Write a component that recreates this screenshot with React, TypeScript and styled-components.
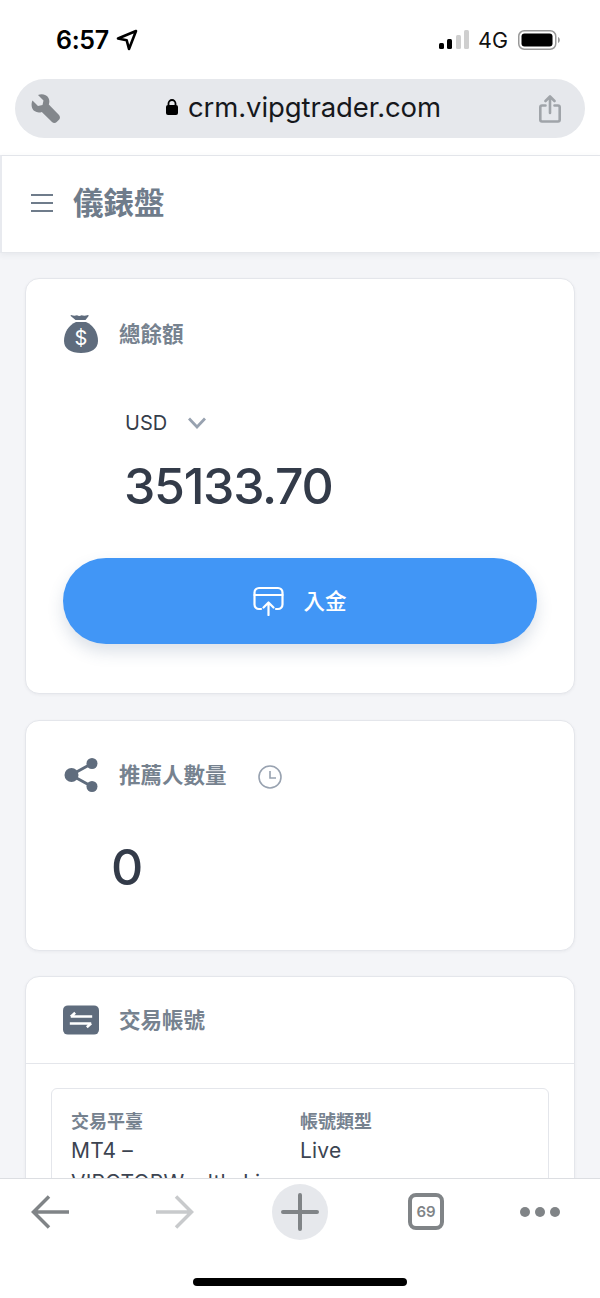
import React from "react";
import styled, { createGlobalStyle } from "styled-components";

const SANS = `Inter, "Noto Sans CJK TC", "Liberation Sans", sans-serif`;

const GlobalStyle = createGlobalStyle`
  html, body { margin: 0; padding: 0; background: #fff; }
  * { box-sizing: border-box; }
`;

const Phone = styled.div`
  width: 600px;
  height: 1298px;
  display: flex;
  flex-direction: column;
  overflow: hidden;
  background: #fff;
  font-family: ${SANS};
`;

const StatusBar = styled.div`
  height: 79px;
  flex: none;
  padding: 24px 40px 0 56px;
  display: flex;
  justify-content: space-between;
  align-items: flex-start;
`;

const StatusSide = styled.div`
  height: 32px;
  display: flex;
  align-items: center;
`;

const Time = styled.span`
  font-size: 25px;
  font-weight: 600;
  letter-spacing: -0.3px;
  color: #000;
  margin-right: 7px;
`;

const Network = styled.span`
  font-size: 21.5px;
  font-weight: 400;
  color: #111;
  margin: 0 10px 0 9px;
`;

const AddressBar = styled.div`
  height: 59px;
  flex: none;
  margin: 0 15px;
  padding: 0 24px 0 14px;
  border-radius: 30px;
  background: #e6e8ec;
  display: flex;
  align-items: center;
  justify-content: space-between;
`;

const Url = styled.div`
  display: flex;
  align-items: center;
  gap: 10px;
  margin-left: 7px;
  padding-bottom: 3px;
  font-size: 27.5px;
  letter-spacing: -0.1px;
  color: #16181c;
`;

const PageHeader = styled.header`
  height: 98px;
  flex: none;
  margin-top: 17px;
  padding: 0 0 3px 29px;
  display: flex;
  align-items: center;
  gap: 20px;
  border-top: 1px solid #e3e5ea;
  border-left: 2px solid #e8eaef;
  border-bottom: 1px solid #e6e8ec;
  box-shadow: 0 2px 6px rgba(60, 70, 90, 0.07);
  position: relative;
`;

const PageTitle = styled.h1`
  margin: 0;
  font-size: 30.5px;
  font-weight: 700;
  line-height: 40px;
  color: #6f7c8b;
`;

const Content = styled.main`
  flex: 1;
  min-height: 0;
  overflow: hidden;
  padding: 25px 25px 0;
  background: #f4f5f8;
  display: flex;
  flex-direction: column;
  gap: 25.5px;
`;

const Card = styled.section`
  flex: none;
  background: #fff;
  border: 1.5px solid #e4e6eb;
  border-radius: 14px;
  box-shadow: 0 1px 3px rgba(60, 70, 90, 0.06);
`;

const CardBody = styled.div`
  padding: 36px 37px 49px;
`;

const ReferralBody = styled.div`
  padding: 37px 37px 53px;
`;

const CardHead = styled.div`
  display: flex;
  align-items: center;
  gap: 20px;
`;

const IconSlot = styled.div`
  width: 36px;
  display: flex;
  justify-content: center;
  flex: none;
`;

const CardTitle = styled.div`
  font-size: 21.5px;
  font-weight: 700;
  line-height: 30px;
  color: #76828f;
`;

const ClockIcon = styled.svg`
  margin: 4px 0 0 11px;
`;

const Currency = styled.div`
  margin: 55px 0 0 62px;
  display: flex;
  align-items: center;
  gap: 21px;
  font-size: 20px;
  line-height: 30px;
  color: #353d4a;
`;

const Amount = styled.div`
  margin: 13px 0 0 61px;
  font-size: 50px;
  font-weight: 500;
  line-height: 70px;
  letter-spacing: -1.3px;
  color: #333b49;
`;

const DepositButton = styled.button`
  width: 474px;
  height: 86px;
  margin-top: 37px;
  border: 0;
  border-radius: 43px;
  background: #4196f6;
  box-shadow: 0 8px 16px rgba(60, 90, 130, 0.18);
  color: #fff;
  font-family: ${SANS};
  font-size: 21.5px;
  font-weight: 500;
  display: flex;
  align-items: center;
  justify-content: center;
  gap: 19px;
`;

const ButtonLabel = styled.span`
  margin-bottom: 4px;
`;

const ReferralCount = styled.div`
  margin: 45px 0 0 48px;
  font-size: 50px;
  font-weight: 500;
  line-height: 60px;
  color: #333b49;
`;

const TableHead = styled.div`
  height: 87px;
  padding: 0 0 1px 37px;
  display: flex;
  align-items: center;
  border-bottom: 1.5px solid #e4e6eb;
`;

const TableBody = styled.div`
  padding: 24px 25px 40px;
`;

const AccountBox = styled.div`
  padding: 20px 19px 30px;
  border: 1.5px solid #e4e6eb;
  border-radius: 6px;
  display: grid;
  grid-template-columns: 229px 1fr;
`;

const FieldLabel = styled.div`
  font-size: 18px;
  font-weight: 700;
  line-height: 26px;
  color: #76828f;
`;

const FieldValue = styled.div`
  font-size: 21px;
  line-height: 32px;
  letter-spacing: 0.2px;
  color: #3c4451;
`;

const Toolbar = styled.nav`
  height: 120px;
  flex: none;
  background: #fff;
  border-top: 1px solid #dcdee2;
  display: flex;
  flex-direction: column;
  align-items: center;
`;

const ToolRow = styled.div`
  width: 100%;
  height: 68px;
  padding: 5px 0 0 31px;
  display: flex;
  align-items: flex-start;
`;

const ToolSlot = styled.div<{ $top: number; $left?: number }>`
  margin: ${(p) => p.$top}px 0 0 ${(p) => p.$left ?? 0}px;
  display: flex;
`;

const PlusCircle = styled.div`
  width: 56px;
  height: 56px;
  margin-left: 78px;
  border-radius: 50%;
  background: #e6e8ec;
  display: flex;
  align-items: center;
  justify-content: center;
`;

const TabCount = styled.div`
  width: 36px;
  height: 37px;
  border: 4px solid #808487;
  border-radius: 8px;
  display: flex;
  align-items: center;
  justify-content: center;
  font-size: 15px;
  font-weight: 600;
  color: #808487;
`;

const Dots = styled.div`
  display: flex;
  gap: 5px;
`;

const Dot = styled.span`
  width: 10px;
  height: 10px;
  border-radius: 50%;
  background: #808487;
`;

const HomeIndicator = styled.div`
  width: 214px;
  height: 8px;
  margin-top: 31px;
  border-radius: 4px;
  background: #000;
`;

const SLATE = "#5f6c7d";

export default function App() {
  return (
    <Phone>
      <GlobalStyle />
      <StatusBar>
        <StatusSide>
          <Time>6:57</Time>
          <svg width="22" height="22" viewBox="0 0 22 22" fill="none" stroke="#000" strokeWidth="2.6" strokeLinejoin="round">
            <path d="M20 2 2 9.5l8.7 1.8L13 20z" />
          </svg>
        </StatusSide>
        <StatusSide>
          <svg width="30" height="20" viewBox="0 0 30 20">
            <rect x="0" y="13" width="5" height="6" rx="1.5" fill="#000" />
            <rect x="8" y="9" width="5" height="10" rx="1.5" fill="#000" />
            <rect x="17" y="5" width="5" height="14" rx="1.5" fill="#cfcfcf" />
            <rect x="25" y="0" width="5" height="19" rx="1.5" fill="#cfcfcf" />
          </svg>
          <Network>4G</Network>
          <svg width="42" height="20" viewBox="0 0 42 20">
            <rect x="0.75" y="0.75" width="37" height="18.5" rx="5.5" fill="none" stroke="#999" strokeWidth="1.5" />
            <rect x="3.5" y="3.5" width="31" height="13" rx="3" fill="#000" />
            <path d="M40 7c1.3.5 1.8 1.6 1.8 3s-.5 2.500-1.800 3z" fill="#999" />
          </svg>
        </StatusSide>
      </StatusBar>

      <AddressBar>
        <svg width="32" height="32" viewBox="0 0 32 32">
          <path
            d="M3.500 7.500 9 13l4.500-1 1-4.500L9 2C13 .5 17.500 1.500 19.500 5c1.200 2.200 1 4.700.3 6.600L30 22c1.300 1.400 1.300 3.500 0 4.800l-2.300 2.300c-1.300 1.300-3.400 1.300-4.700 0L12.800 18.900c-2.200.8-5 .8-7.300-.8C2.400 15.900 1.800 11 3.500 7.500z"
            fill="#83878c"
          />
        </svg>
        <Url>
          <svg width="12" height="16" viewBox="0 0 12 16">
            <path d="M2.500 6.500V4.500a3.500 3.500 0 0 1 7 0v2" fill="none" stroke="#000" strokeWidth="1.800" />
            <rect x="0" y="6" width="12" height="10" rx="2" fill="#000" />
          </svg>
          crm.vipgtrader.com
        </Url>
        <svg width="22" height="28" viewBox="0 0 22 28" fill="none" stroke="#a0a4a9" strokeWidth="2.600" strokeLinecap="round" strokeLinejoin="round">
          <path d="M6.500 10.500H3a1.700 1.700 0 0 0-1.700 1.700v12.600A1.700 1.700 0 0 0 3 26.500h16a1.700 1.700 0 0 0 1.700-1.700V12.200a1.700 1.700 0 0 0-1.700-1.700h-3.500" />
          <path d="M11 18V2M6.500 6 11 1.500 15.500 6" />
        </svg>
      </AddressBar>

      <PageHeader>
        <svg width="22" height="20" viewBox="0 0 22 20" stroke="#6f7c8b" strokeWidth="2">
          <path d="M0 2h22M0 10h22M0 18h22" />
        </svg>
        <PageTitle>儀錶盤</PageTitle>
      </PageHeader>

      <Content>
        <Card>
          <CardBody>
            <CardHead>
              <IconSlot>
                <svg width="34" height="38" viewBox="0 0 34 38">
                  <path d="M7 0c2.500 1 4 1 6 .3 1.500 1 3 1 4.500 0 2 .7 4 .7 6.500-.3.800 0 .800 1 .400 1.300L21.500 5h-10L7 1.300C6.500 1 6.500 0 7 0z" fill={SLATE} />
                  <path d="M12 7h10c7 3 12 10 12 19 0 8-7 12-17 12S0 34 0 26C0 17 5 10 12 7z" fill={SLATE} />
                  <text x="17" y="30" textAnchor="middle" fontSize="20" fontFamily="Inter, sans-serif" fill="#fff">$</text>
                </svg>
              </IconSlot>
              <CardTitle>總餘額</CardTitle>
            </CardHead>
            <Currency>
              USD
              <svg width="18" height="12" viewBox="0 0 18 12" fill="none" stroke="#98a2b0" strokeWidth="2.800">
                <path d="M1 1.500 9 10l8-8.500" />
              </svg>
            </Currency>
            <Amount>35133.70</Amount>
            <DepositButton>
              <svg width="31" height="30" viewBox="0 0 31 30" fill="none" stroke="#fff" strokeWidth="2.200" strokeLinecap="round" strokeLinejoin="round">
                <path d="M8 23H6a4.500 4.500 0 0 1-4.500-4.500v-12A4.500 4.500 0 0 1 6 2h19a4.500 4.500 0 0 1 4.500 4.500v12A4.500 4.500 0 0 1 25 23h-2" />
                <path d="M1.500 9h28M15.500 29V17M10.500 21.500l5-5 5 5" />
              </svg>
              <ButtonLabel>入金</ButtonLabel>
            </DepositButton>
          </CardBody>
        </Card>

        <Card>
          <ReferralBody>
            <CardHead>
              <IconSlot>
                <svg width="34" height="34" viewBox="0 0 34 34" fill={SLATE} stroke={SLATE}>
                  <path d="M7 17 27 6M7 17l20 11" strokeWidth="3" />
                  <circle cx="7.500" cy="17" r="7" stroke="none" />
                  <circle cx="28" cy="5.500" r="5.500" stroke="none" />
                  <circle cx="28" cy="28.500" r="5.500" stroke="none" />
                </svg>
              </IconSlot>
              <CardTitle>推薦人數量</CardTitle>
              <ClockIcon width="24" height="24" viewBox="0 0 24 24" fill="none" stroke="#98a2b0" strokeWidth="1.600">
                <circle cx="12" cy="12" r="11" />
                <path d="M12 6v7h6" />
              </ClockIcon>
            </CardHead>
            <ReferralCount>0</ReferralCount>
          </ReferralBody>
        </Card>

        <Card>
          <TableHead>
            <CardHead>
              <IconSlot>
                <svg width="37" height="30" viewBox="0 0 37 30">
                  <rect width="37" height="30" rx="5" fill={SLATE} />
                  <path d="M8 11.500h22M8 11.500l4.500-4M29 18.500H7M29 18.500l-4.500 4" fill="none" stroke="#fff" strokeWidth="2.600" />
                </svg>
              </IconSlot>
              <CardTitle>交易帳號</CardTitle>
            </CardHead>
          </TableHead>
          <TableBody>
            <AccountBox>
              <div>
                <FieldLabel>交易平臺</FieldLabel>
                <FieldValue>
                  MT4 –
                  <br />
                  VIPGTOPWealth-Live
                </FieldValue>
              </div>
              <div>
                <FieldLabel>帳號類型</FieldLabel>
                <FieldValue>Live</FieldValue>
              </div>
            </AccountBox>
          </TableBody>
        </Card>
      </Content>

      <Toolbar>
        <ToolRow>
          <ToolSlot $top={11}>
            <svg width="38" height="34" viewBox="0 0 38 34" fill="none" stroke="#808487" strokeWidth="3.500">
              <path d="M38 17H3M18 1.500 2.500 17 18 32.500" />
            </svg>
          </ToolSlot>
          <ToolSlot $top={11} $left={87}>
            <svg width="38" height="34" viewBox="0 0 38 34" fill="none" stroke="#c8cacc" strokeWidth="3.500">
              <path d="M0 17h35M20 1.500 35.500 17 20 32.500" />
            </svg>
          </ToolSlot>
          <PlusCircle>
            <svg width="38" height="38" viewBox="0 0 38 38" stroke="#808487" strokeWidth="4" strokeLinecap="round">
              <path d="M2 19h34M19 2v34" />
            </svg>
          </PlusCircle>
          <ToolSlot $top={9} $left={80}>
            <TabCount>69</TabCount>
          </ToolSlot>
          <ToolSlot $top={23} $left={76}>
            <Dots>
              <Dot />
              <Dot />
              <Dot />
            </Dots>
          </ToolSlot>
        </ToolRow>
        <HomeIndicator />
      </Toolbar>
    </Phone>
  );
}
